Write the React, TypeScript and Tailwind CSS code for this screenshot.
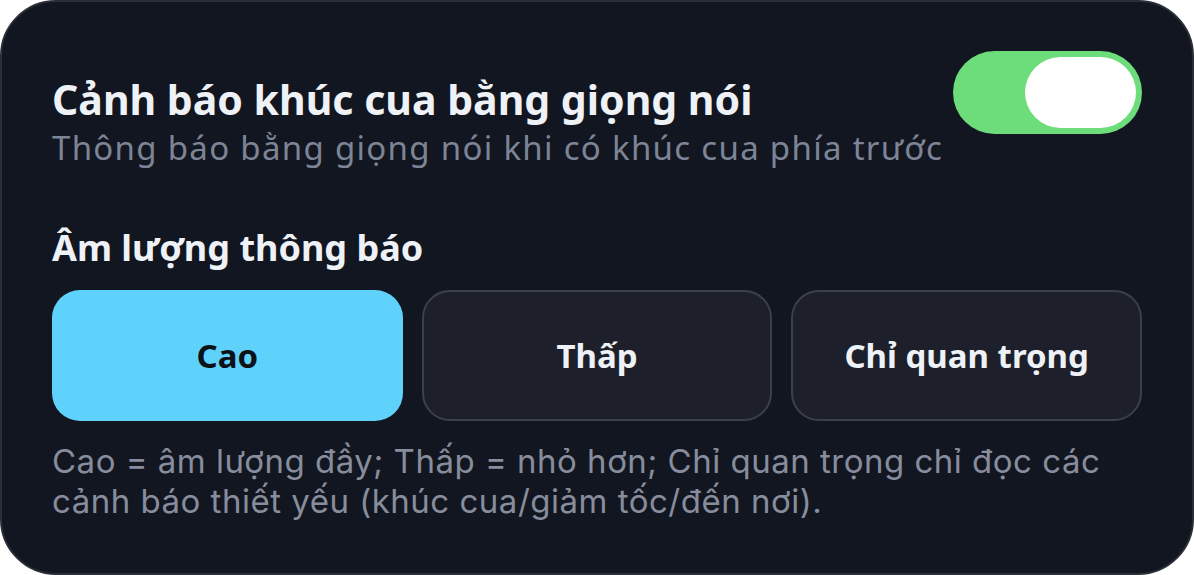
import { useState } from 'react';

const options = ['Cao', 'Thấp', 'Chỉ quan trọng'];

export default function App() {
  const [enabled, setEnabled] = useState(true);
  const [volume, setVolume] = useState('Cao');

  return (
    <div className="w-[1194px] h-[575px] bg-white">
      <div className="h-full rounded-[56px] border-2 border-[#2a2e37] bg-[#121620] px-[50px] pt-[48px] font-['Noto_Sans',sans-serif]">
        <div className="flex items-start justify-between">
          <div className="pt-[24px]">
            <h2 className="text-[41px] leading-[50px] font-bold text-[#eef1f6]">Cảnh báo khúc cua bằng giọng nói</h2>
            <p className="text-[33px] leading-[48px] tracking-[1.3px] text-[#7d8496]">Thông báo bằng giọng nói khi có khúc cua phía trước</p>
          </div>
          <button
            onClick={() => setEnabled(!enabled)}
            className={`mt-[1px] w-[189px] h-[83px] rounded-full p-[6px] flex ${enabled ? 'bg-[#6ddd7b] justify-end' : 'bg-[#3a3f4b] justify-start'}`}
          >
            <span className="block w-[111px] h-[71px] rounded-full bg-white" />
          </button>
        </div>

        <h3 className="mt-[53px] text-[36px] leading-[46px] font-bold text-[#eef1f6]">Âm lượng thông báo</h3>

        <div className="mt-[19px] grid grid-cols-3 gap-[19px]">
          {options.map((o) => (
            <button
              key={o}
              onClick={() => setVolume(o)}
              className={`h-[131px] rounded-[28px] text-[33px] font-bold ${
                volume === o
                  ? 'bg-[#5fd2fc] text-[#0d1118]'
                  : 'bg-[#1d202a] border-2 border-[#3b404c] text-[#eef1f6]'
              }`}
            >
              {o}
            </button>
          ))}
        </div>

        <p className="mt-[20px] text-[33px] leading-[40px] tracking-[0.5px] text-[#878d9c] font-['Inter',sans-serif]">
          Cao = âm lượng đầy; Thấp = nhỏ hơn; Chỉ quan trọng chỉ đọc các cảnh báo thiết yếu (khúc cua/giảm tốc/đến nơi).
        </p>
      </div>
    </div>
  );
}
